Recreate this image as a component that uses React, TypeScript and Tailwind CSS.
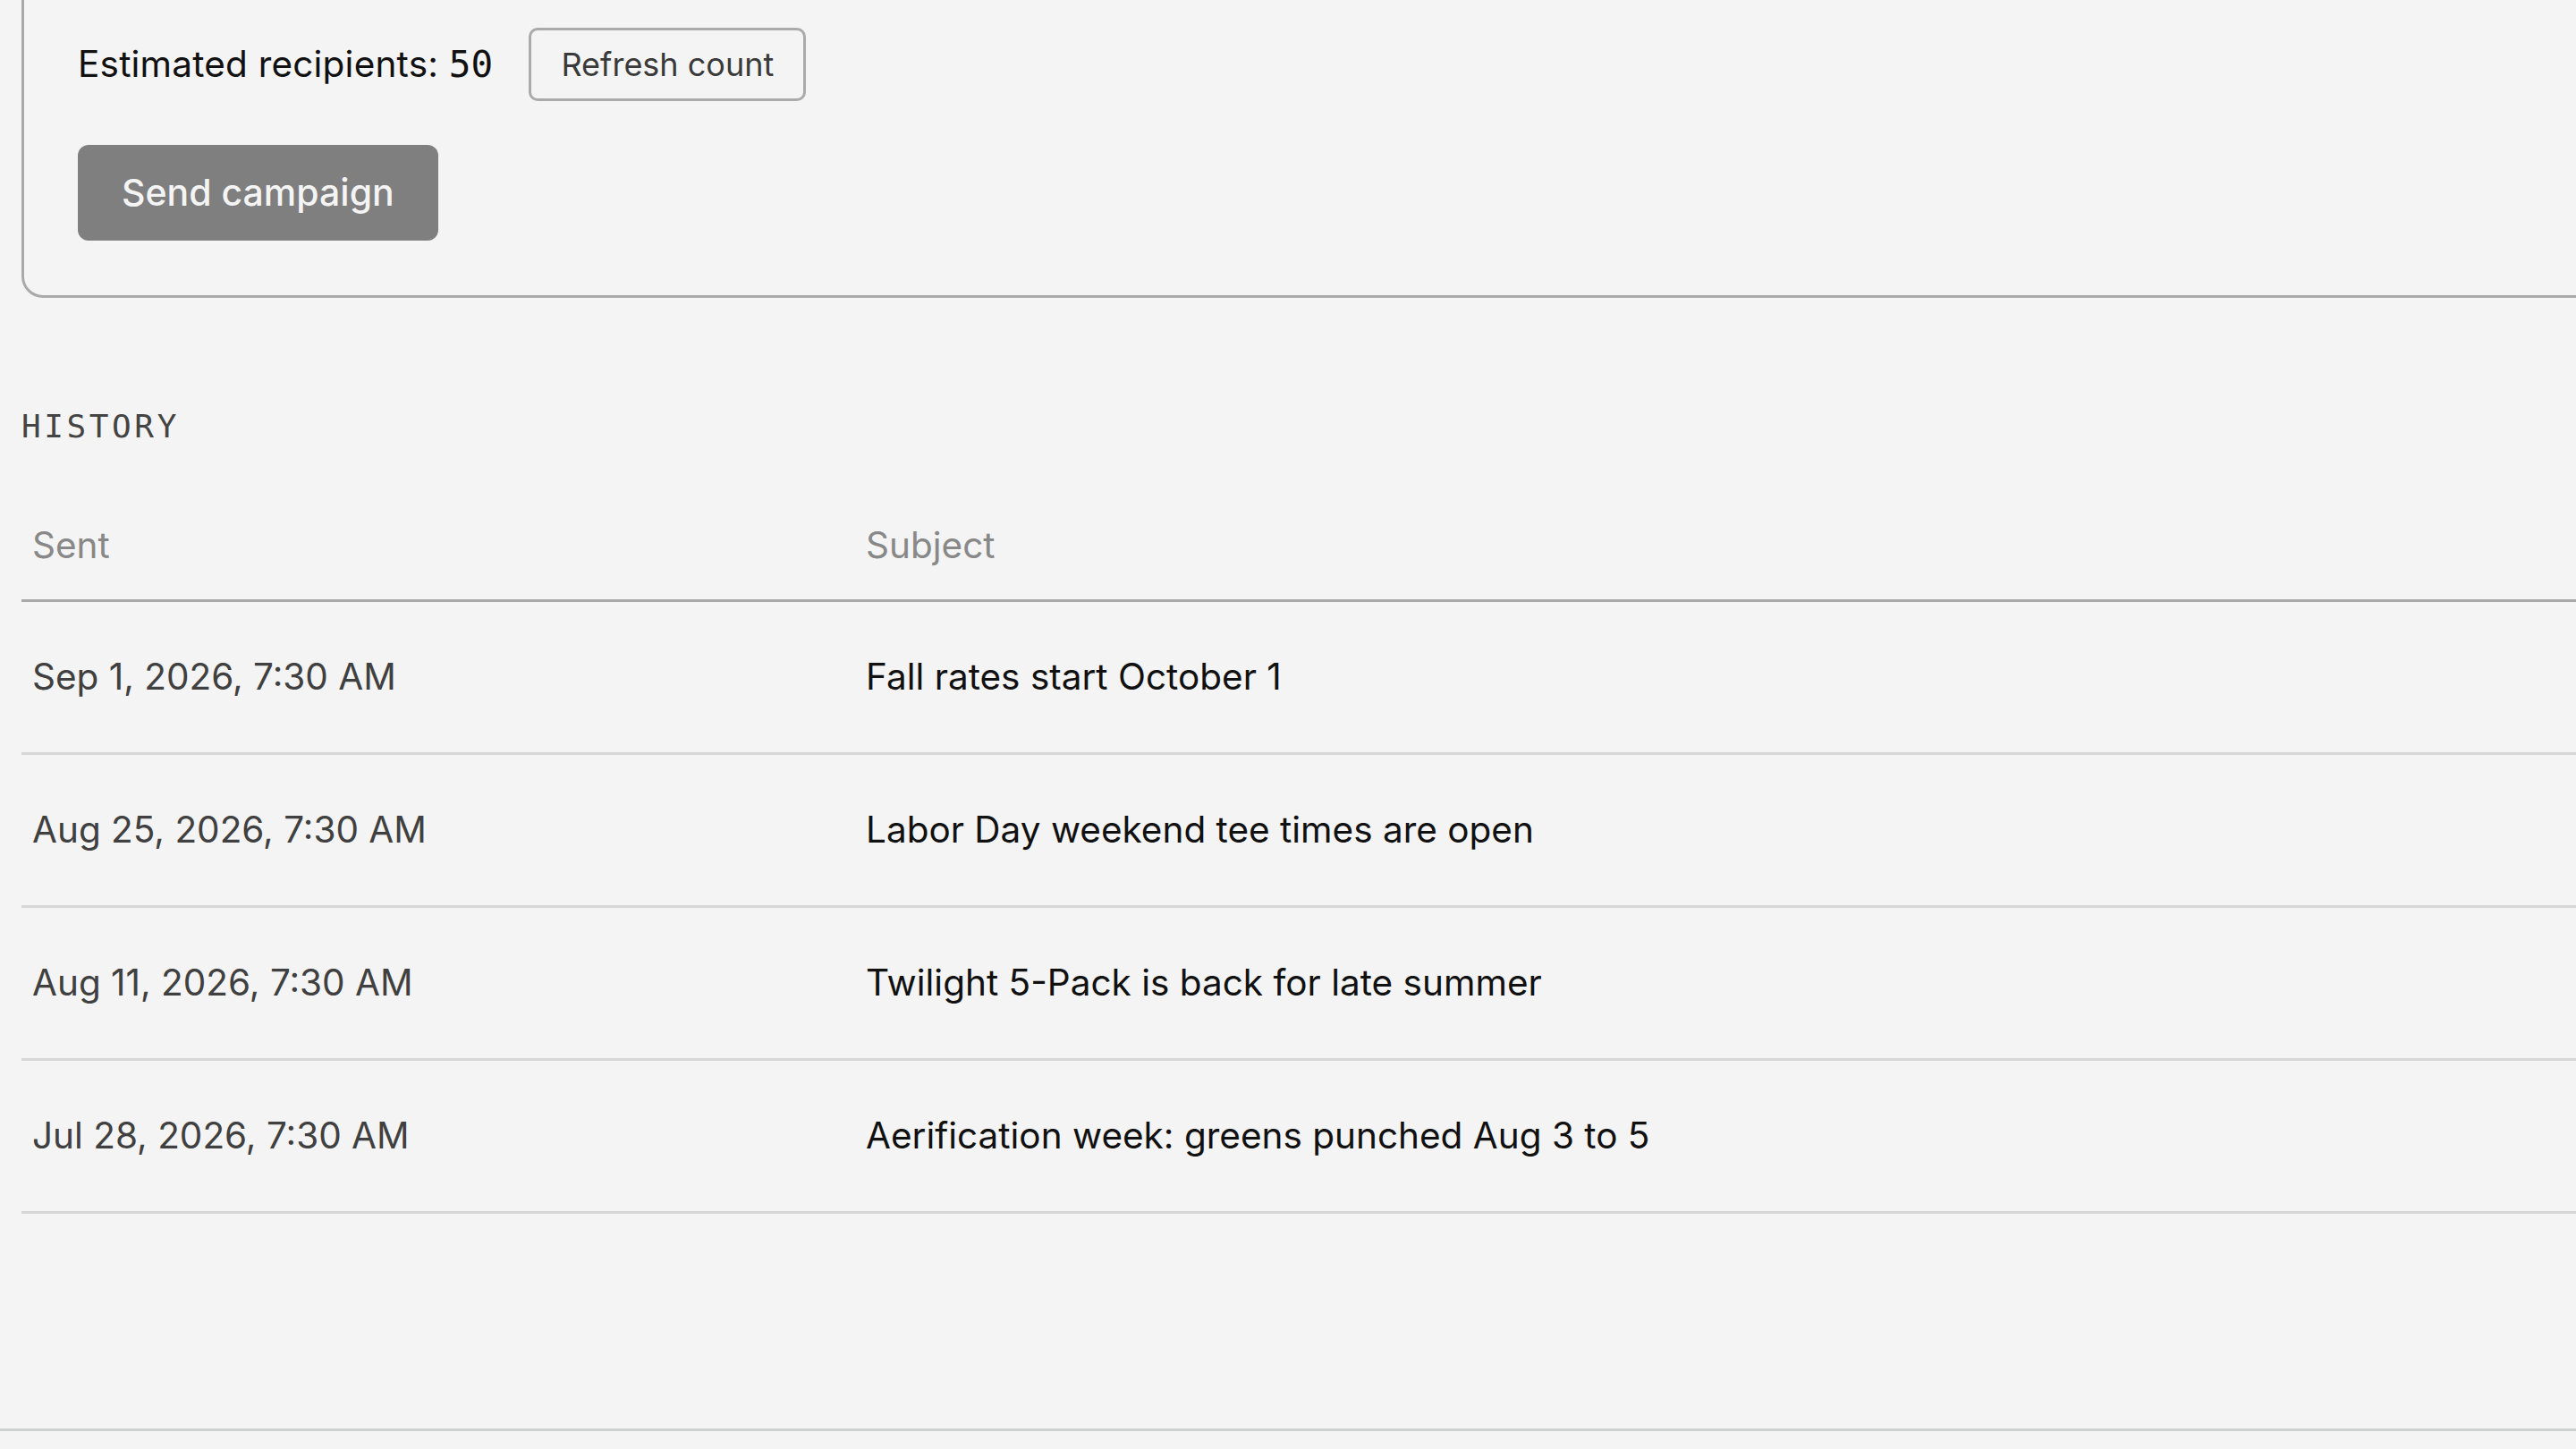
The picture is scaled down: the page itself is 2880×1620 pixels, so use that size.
import React from 'react';

type Campaign = {
  sent: string;
  subject: string;
};

const history: Campaign[] = [
  { sent: 'Sep 1, 2026, 7:30 AM', subject: 'Fall rates start October 1' },
  { sent: 'Aug 25, 2026, 7:30 AM', subject: 'Labor Day weekend tee times are open' },
  { sent: 'Aug 11, 2026, 7:30 AM', subject: 'Twilight 5-Pack is back for late summer' },
  { sent: 'Jul 28, 2026, 7:30 AM', subject: 'Aerification week: greens punched Aug 3 to 5' },
];

const mono = "font-['DejaVu_Sans_Mono','Liberation_Mono',monospace]";

const App: React.FC = () => {
  return (
    <div className="h-[1620px] w-full overflow-hidden bg-[#f4f4f4] font-['Inter','Noto_Sans',sans-serif] text-[#111]">
      <div className="w-[2940px] pl-6">
        {/* Send panel */}
        <section className="-mt-[120px] rounded-[24px] border-[3px] border-[#a9a9a9] px-[60px] pt-[148px] pb-[61px]">
          <div className="flex items-center gap-[40px]">
            <p className="text-[40.5px] leading-none tracking-[0.005em] text-[#111]">
              Estimated recipients: <span className={`${mono} text-[41px]`}>50</span>
            </p>
            <button
              type="button"
              className="h-[82px] rounded-[10px] border-[3px] border-[#aaaaaa] px-[33px] text-[36px] text-[#3a3a3a]"
            >
              Refresh count
            </button>
          </div>
          <button
            type="button"
            className="mt-[49px] h-[107px] rounded-[12px] bg-[#7f7f7f] px-[49px] text-[41px] font-medium text-[#f4f4f4]"
          >
            Send campaign
          </button>
        </section>

        {/* Past sends */}
        <h2 className={`${mono} mt-[120px] text-[36px] leading-[48px] tracking-[0.1em] text-[#444]`}>HISTORY</h2>

        <div className="mt-[50px]">
          <div className="grid h-[122px] grid-cols-[932px_1fr] items-center border-b-[3px] border-[#a9a9a9] text-[40.5px] text-[#888]">
            <div className="px-3">Sent</div>
            <div className="px-3">Subject</div>
          </div>
          {history.map((row) => (
            <div
              key={row.sent}
              className="grid h-[171px] grid-cols-[932px_1fr] items-center border-b-[3px] border-[#d6d6d6] text-[40.5px]"
            >
              <div className="px-3 text-[#404040]">{row.sent}</div>
              <div className="px-3 text-[#111]">{row.subject}</div>
            </div>
          ))}
        </div>
      </div>

      <footer className="mt-[240px] border-t-[3px] border-[#cfd0d0]" />
    </div>
  );
};

export default App;
